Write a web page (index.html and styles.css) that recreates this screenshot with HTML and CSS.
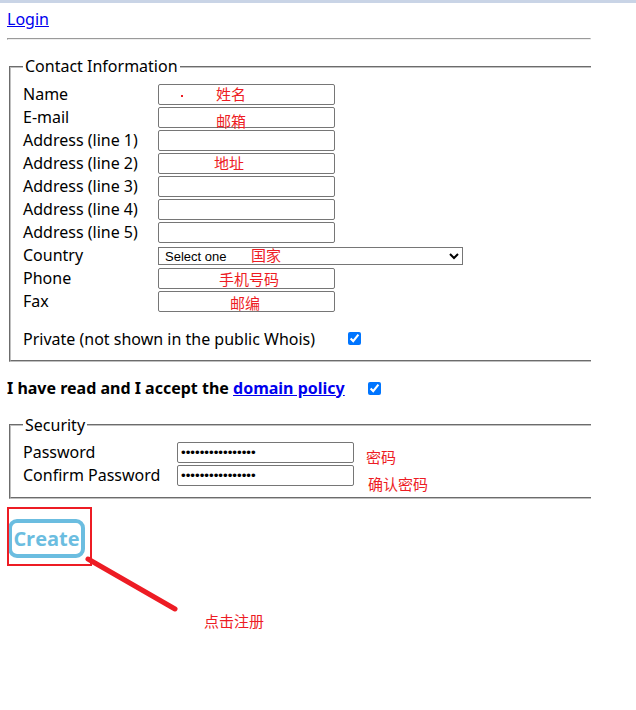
FILE: index.html
```html
<!DOCTYPE html>
<html lang="en">
<head>
<meta charset="utf-8">
<title>Create account</title>
<link rel="stylesheet" href="styles.css">
</head>
<body>
<div class="topbar"></div>
<div class="page">
  <div class="login-line"><a href="#" class="link">Login</a></div>
  <hr class="rule">
  <form class="form">
    <fieldset class="box contact">
      <legend class="legend">Contact Information</legend>
      <div class="grid">
        <span class="lbl">Name</span>
        <span class="field"><input class="txt" type="text"><i class="dot"></i><span class="note n-name">姓名</span></span>
        <span class="lbl">E-mail</span>
        <span class="field"><input class="txt" type="text"><span class="note n-email">邮箱</span></span>
        <span class="lbl">Address (line 1)</span>
        <span class="field"><input class="txt" type="text"></span>
        <span class="lbl">Address (line 2)</span>
        <span class="field"><input class="txt" type="text"><span class="note n-addr">地址</span></span>
        <span class="lbl">Address (line 3)</span>
        <span class="field"><input class="txt" type="text"></span>
        <span class="lbl">Address (line 4)</span>
        <span class="field"><input class="txt" type="text"></span>
        <span class="lbl">Address (line 5)</span>
        <span class="field"><input class="txt" type="text"></span>
        <span class="lbl">Country</span>
        <span class="field"><select class="sel"><option>Select one</option></select><span class="note n-country">国家</span></span>
        <span class="lbl">Phone</span>
        <span class="field"><input class="txt" type="text"><span class="note n-phone">手机号码</span></span>
        <span class="lbl">Fax</span>
        <span class="field"><input class="txt" type="text"><span class="note n-fax">邮编</span></span>
      </div>
      <div class="private"><span>Private (not shown in the public Whois)</span><input type="checkbox" class="chk chk-private" checked></div>
    </fieldset>
    <p class="accept">I have read and I accept the <a href="#" class="link">domain policy</a><input type="checkbox" class="chk chk-accept" checked></p>
    <fieldset class="box security">
      <legend class="legend">Security</legend>
      <div class="grid sec-grid">
        <span class="lbl">Password</span>
        <span class="field"><input class="txt" type="password" value="abcdefghijklmnop"><span class="note n-pw">密码</span></span>
        <span class="lbl">Confirm Password</span>
        <span class="field"><input class="txt" type="password" value="abcdefghijklmnop"><span class="note n-pw2">确认密码</span></span>
      </div>
    </fieldset>
    <div class="create-wrap">
      <button type="button" class="create">Create</button>
      <span class="hl-box"></span>
      <svg class="arrow" width="200" height="100" viewBox="0 0 200 100"><line x1="80" y1="40" x2="167" y2="90" stroke="#ed1c24" stroke-width="5" stroke-linecap="round"/></svg>
      <span class="note n-create">点击注册</span>
    </div>
  </form>
</div>
</body>
</html>
```
FILE: styles.css
```css
html, body {
  margin: 0;
  padding: 0;
  background: #fff;
}
body {
  font-family: "Noto Sans", "Open Sans", sans-serif;
  font-size: 16px;
  line-height: 21px;
  color: #000;
  min-height: 710px;
}
.topbar {
  height: 3px;
  background: #c9d4e6;
}
.page {
  margin-left: 7px;
  width: 584px;
  padding-top: 6px;
  padding-bottom: 120px;
  overflow: hidden;
}
.link {
  color: #0000ee;
  text-decoration: underline;
}
.rule {
  margin: 8px 0;
}
.form {
  margin: 0;
}
.box {
  margin: 0 -60px 0 2px;
  padding: 5.6px 12px 10px;
  border: 2px groove #c0c0c0;
}
.contact {
  margin-top: 16px;
}
.legend {
  padding: 0 2px;
  line-height: 21px;
}
.grid {
  display: grid;
  grid-template-columns: 135px auto;
  grid-auto-rows: 23px;
  align-items: center;
  justify-items: start;
}
.sec-grid {
  grid-template-columns: 154px auto;
}
.lbl {
  white-space: nowrap;
}
.field {
  position: relative;
  display: flex;
}
.txt {
  width: 177px;
  height: 21px;
  box-sizing: border-box;
  margin: 0;
  padding: 1px 3px;
  border: 1px solid #767676;
  border-radius: 2px;
  background: #fff;
  font: 13.33px "Liberation Sans", Arial, sans-serif;
  color: #000;
}
.sel {
  width: 305px;
  height: 18px;
  box-sizing: border-box;
  margin: 1px 0 0;
  padding: 0 0 0 2px;
  border: 1px solid #767676;
  border-radius: 0;
  background: #fff;
  color: #000;
  font: 13px "Liberation Sans", Arial, sans-serif;
}
.note {
  position: absolute;
  top: 0;
  left: 0;
  font-family: "Noto Sans CJK SC", sans-serif;
  font-size: 15px;
  line-height: 21px;
  color: #ed1c24;
  white-space: nowrap;
  pointer-events: none;
}
.dot {
  position: absolute;
  left: 23px;
  top: 11px;
  width: 2px;
  height: 2px;
  background: #ed1c24;
}
.n-name { left: 58px; top: -1px; }
.n-email { left: 58px; top: 3px; }
.n-addr { left: 56px; top: -1px; }
.n-country { left: 93px; top: -2px; }
.n-phone { left: 61px; top: 0; }
.n-fax { left: 72px; top: 1px; }
.n-pw { left: 189px; top: 4px; }
.n-pw2 { left: 191px; top: 8px; }
.n-create { left: 196px; top: 91px; }
.private {
  display: flex;
  align-items: center;
  margin-top: 16px;
}
.chk {
  width: 13px;
  height: 13px;
  margin: 0;
}
.chk-private {
  margin-left: 33px;
  position: relative;
  top: -1px;
}
.accept {
  margin: 16px 0;
  font-weight: bold;
}
.chk-accept {
  margin-left: 23px;
  vertical-align: -1px;
}
.create-wrap {
  position: relative;
  margin: 20px 0 0 1px;
  width: 77px;
  height: 39px;
}
.create {
  display: block;
  width: 77px;
  height: 39px;
  box-sizing: border-box;
  margin: 0;
  padding: 0;
  border: 4px solid #6bbde0;
  border-radius: 9px;
  background: #fff;
  color: #6bbde0;
  font: bold 20px/1 "Open Sans", sans-serif;
  cursor: pointer;
}
.hl-box {
  position: absolute;
  left: -1px;
  top: -12px;
  width: 85px;
  height: 59px;
  box-sizing: border-box;
  border: 2px solid #ed1c24;
}
.arrow {
  position: absolute;
  left: 0;
  top: 0;
  overflow: visible;
}
```
